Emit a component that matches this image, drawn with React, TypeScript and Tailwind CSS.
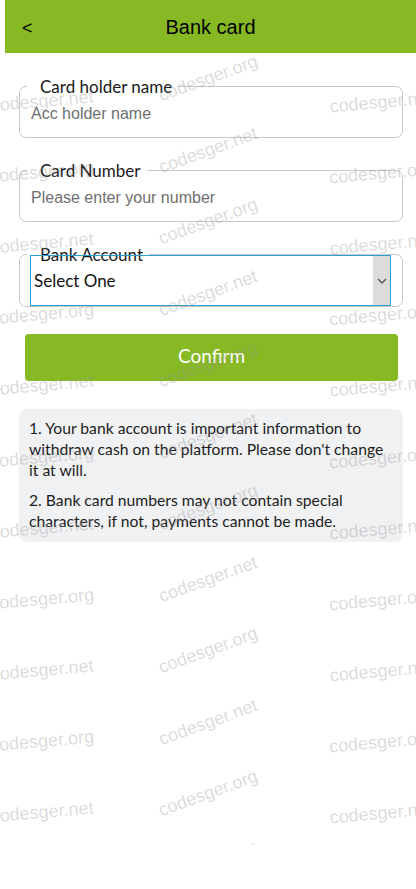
import React from 'react';

const rows = Array.from({ length: 11 }, (_, i) => i);
const midRows = Array.from({ length: 12 }, (_, i) => i);

const Watermark: React.FC = () => (
  <div className="pointer-events-none absolute left-0 top-0 z-10 h-[845px] w-full overflow-hidden font-['Liberation_Sans',Arial,sans-serif] text-[18px] leading-[20px] text-[rgba(150,150,150,0.34)]">
    {rows.map(i => (
      <span
        key={`l${i}`}
        className="absolute -translate-x-1/2 -translate-y-1/2 -rotate-[5deg] whitespace-nowrap"
        style={{ left: 42, top: 101 + i * 71.1 }}
      >
        {i % 2 === 0 ? 'codesger.net' : 'codesger.org'}
      </span>
    ))}
    {midRows.map(i => (
      <span
        key={`m${i}`}
        className="absolute -translate-x-1/2 -translate-y-1/2 -rotate-[20deg] whitespace-nowrap"
        style={{ left: 208, top: 78 + i * 71.5 }}
      >
        {i % 2 === 0 ? 'codesger.org' : 'codesger.net'}
      </span>
    ))}
    {rows.map(i => (
      <span
        key={`r${i}`}
        className="absolute -translate-x-1/2 -translate-y-1/2 -rotate-[5deg] whitespace-nowrap"
        style={{ left: 381, top: 102 + i * 71.1 }}
      >
        {i % 2 === 0 ? 'codesger.net' : 'codesger.org'}
      </span>
    ))}
  </div>
);

const Field: React.FC<{ label: string; placeholder: string }> = ({ label, placeholder }) => (
  <div className="relative h-[52px] rounded-[7px] border border-[#c8c8c8]">
    <span className="absolute left-[7px] top-[-11px] bg-white pl-[13px] pr-[6px] font-['Lato',sans-serif] text-[17px] leading-[22px] text-[#1a1a1a]">
      {label}
    </span>
    <input
      placeholder={placeholder}
      className="h-full w-full bg-transparent px-[11px] pt-[4px] font-['Liberation_Sans',Arial,sans-serif] text-[16px] text-[#222] outline-none placeholder:text-[#6f6f6f]"
    />
  </div>
);

export default function App() {
  return (
    <div className="relative min-h-[889px] w-full overflow-hidden bg-white">
      <Watermark />

      {/* Header */}
      <div className="relative z-20 ml-[5px] flex h-[53px] items-center bg-[#86b923] font-['Liberation_Sans',Arial,sans-serif] text-black">
        <button className="w-[40px] pl-[17px] pt-[3px] text-left text-[18px]">&lt;</button>
        <h1 className="flex-1 text-center text-[20px]">Bank card</h1>
        <div className="w-[40px]" />
      </div>

      <div className="flex flex-col pl-[19px] pr-[13px]">
        <div className="mt-[33px]">
          <Field label="Card holder name" placeholder="Acc holder name" />
        </div>
        <div className="mt-[32px]">
          <Field label="Card Number" placeholder="Please enter your number" />
        </div>

        {/* Bank account select */}
        <div className="relative mt-[32px] h-[53px] rounded-[7px] border border-[#c8c8c8]">
          <span className="absolute left-[7px] top-[-11px] bg-white pl-[13px] pr-[6px] font-['Lato',sans-serif] text-[17px] leading-[22px] text-[#1a1a1a]">
            Bank Account
          </span>
          <div className="relative ml-[10px] mr-[11px] flex h-[51px] border border-[#2a9fd6] font-['Lato',sans-serif] text-[17px] text-[#111]">
            <div className="flex flex-1 items-center pl-[3px] pt-[1px]">Select One</div>
            <div className="flex w-[17px] items-center justify-center bg-[#dcdcdc]">
              <svg width="10" height="6" viewBox="0 0 10 6" fill="none">
                <path d="M1 1l4 4 4-4" stroke="#555" strokeWidth="1.3" />
              </svg>
            </div>
          </div>
        </div>

        <button className="ml-[6px] mr-[5px] mt-[27px] h-[47px] rounded-[4px] bg-[#86b923] pb-[3px] font-['Lato',sans-serif] text-[19px] text-white">
          Confirm
        </button>

        <div className="mt-[28px] rounded-[8px] bg-[#f0f1f3] pb-[10px] pl-[10px] pr-[12px] pt-[9px] font-['Lato',sans-serif] text-[15.7px] leading-[21px] text-[#1c1c1c]">
          <p className="mb-[9px]">
            1. Your bank account is important information to withdraw cash on the platform. Please don't change it at will.
          </p>
          <p>2. Bank card numbers may not contain special characters, if not, payments cannot be made.</p>
        </div>
      </div>
    </div>
  );
}
